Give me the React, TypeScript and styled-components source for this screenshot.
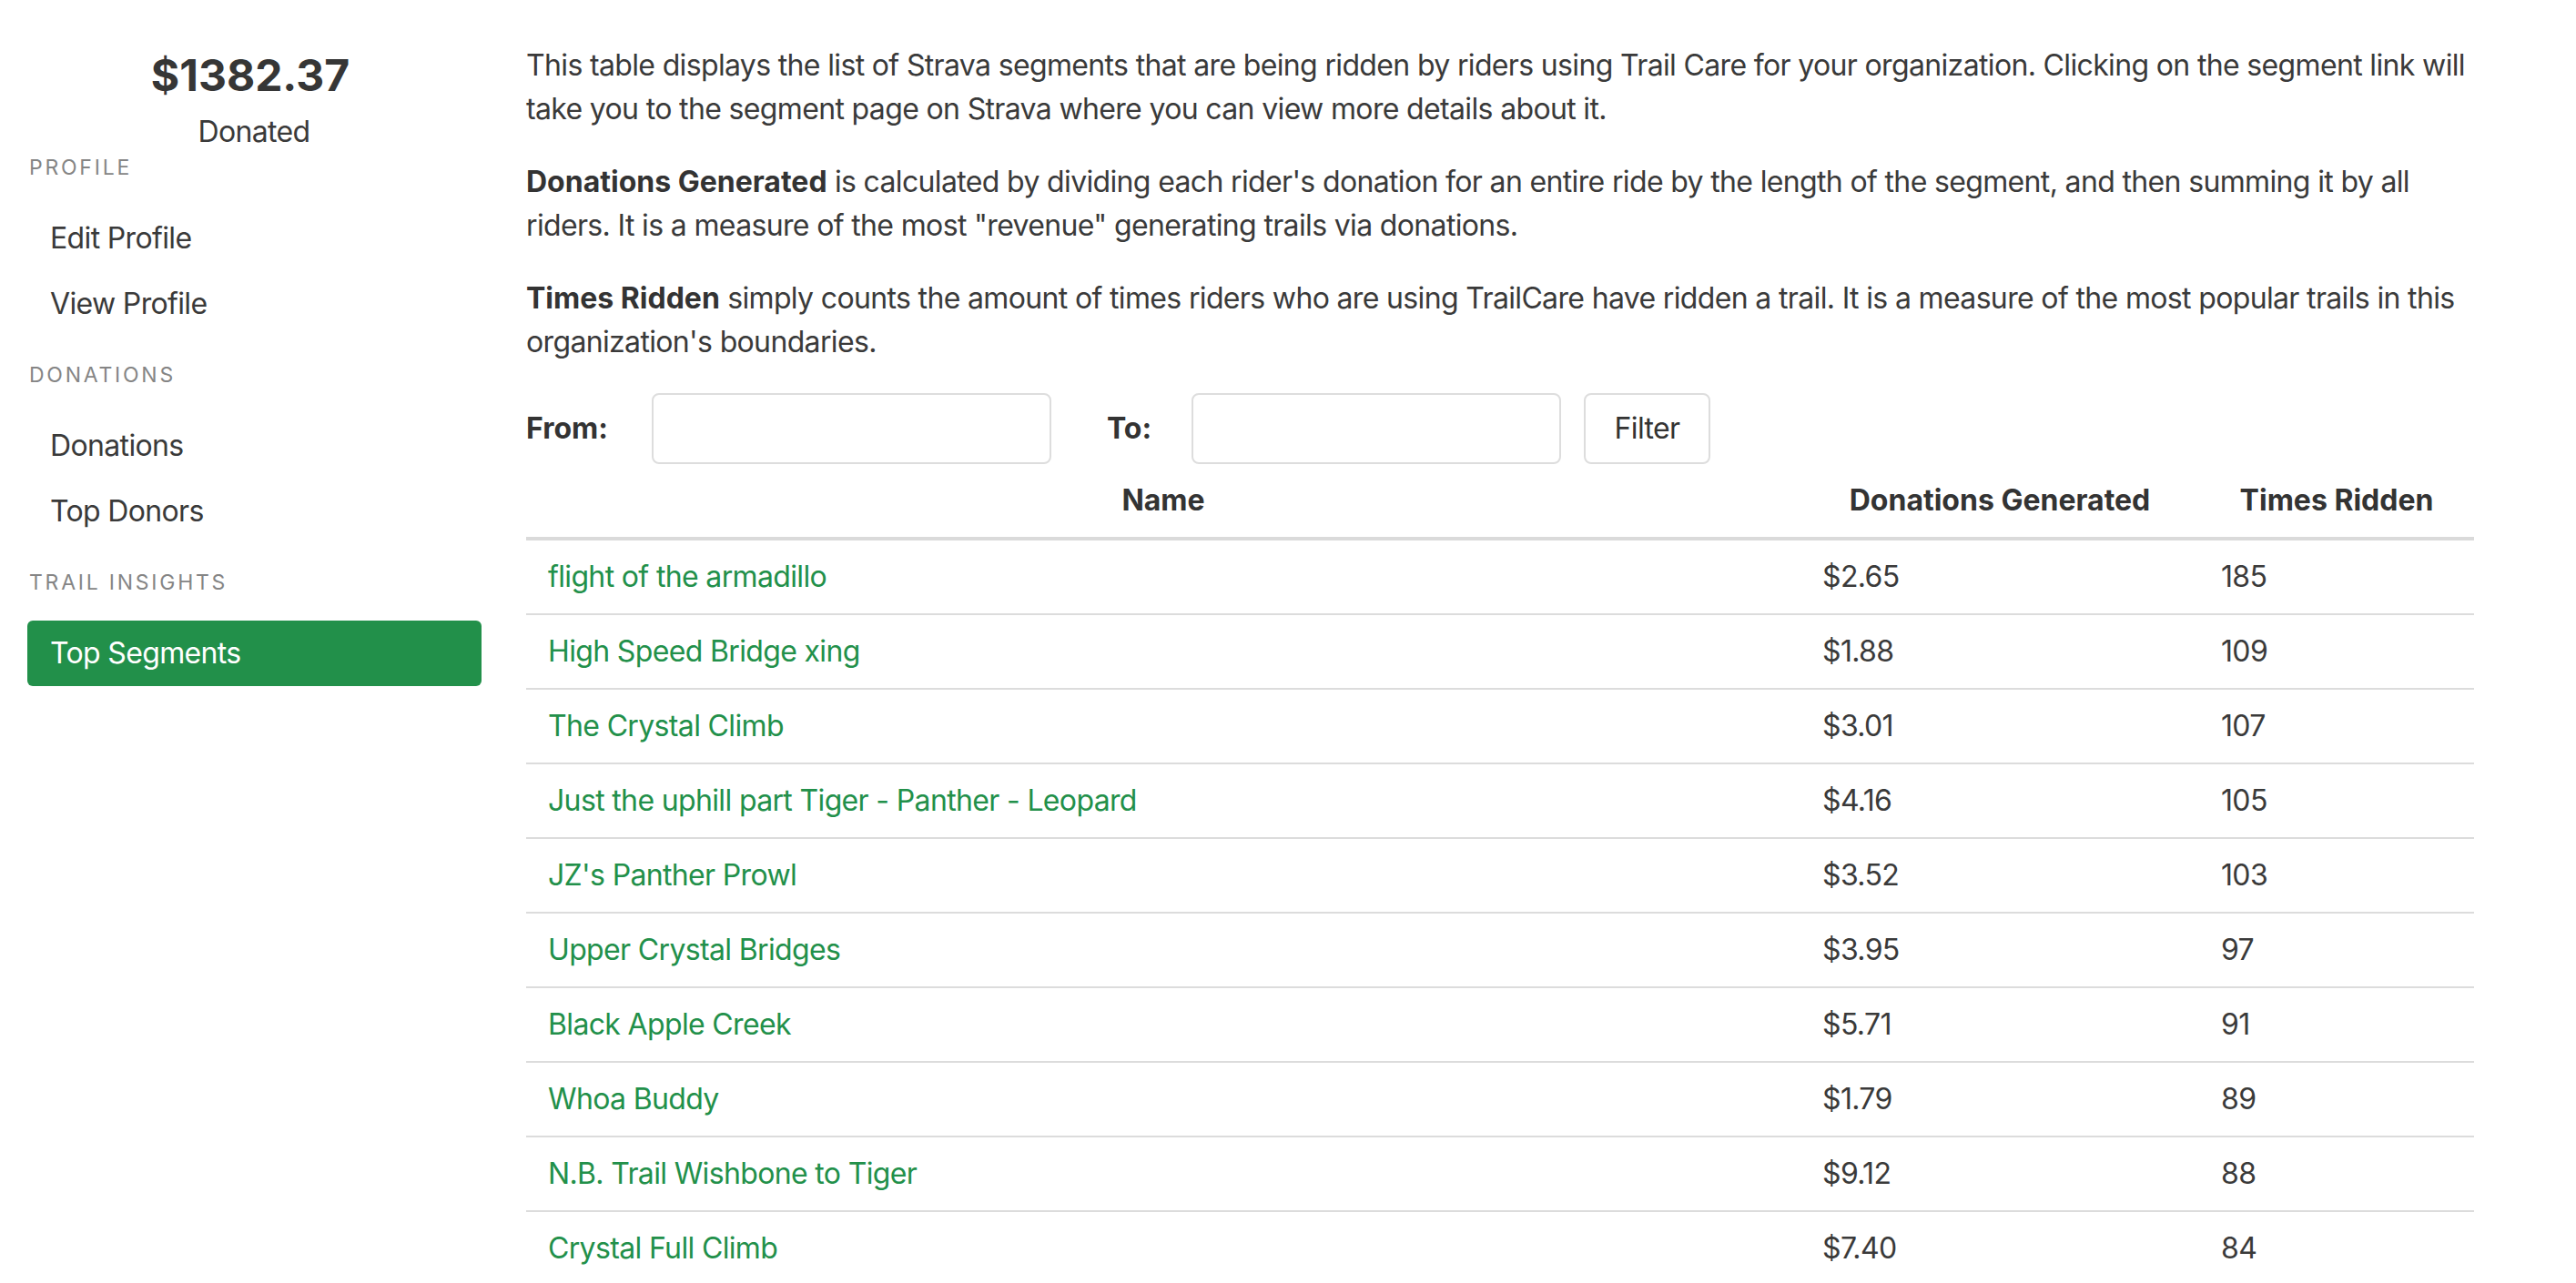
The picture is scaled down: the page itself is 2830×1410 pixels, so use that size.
import React from "react";
import styled, { createGlobalStyle } from "styled-components";

const GlobalStyle = createGlobalStyle`
  html, body { margin: 0; padding: 0; background: #ffffff; }
  body {
    font-family: Inter, "Noto Sans", "Liberation Sans", sans-serif;
    font-size: 32px;
    line-height: 48px;
    letter-spacing: -0.65px;
    color: #3a3a3a;
  }
  * { box-sizing: border-box; }
`;

const Page = styled.div`
  display: flex;
  align-items: flex-start;
  width: 2830px;
  height: 1410px;
  overflow: hidden;
`;

const Sidebar = styled.aside`
  width: 560px;
  flex: none;
  padding: 54px 31px 0 30px;
  display: flex;
  flex-direction: column;
`;

const Stats = styled.div`
  display: flex;
  flex-direction: column;
  align-items: center;
  padding-right: 9px;
`;

const Amount = styled.div`
  font-size: 48px;
  line-height: 58px;
  font-weight: 700;
  letter-spacing: 0;
  color: #363636;
`;

const AmountLabel = styled.div`
  font-size: 32px;
  line-height: 40px;
  margin-top: 13px;
  padding-left: 8px;
`;

const SectionHeading = styled.div<{ $first?: boolean }>`
  font-size: 23px;
  line-height: 36px;
  letter-spacing: 0.12em;
  text-transform: uppercase;
  color: #858585;
  margin: ${(p) => (p.$first ? "1px" : "24px")} 0 24px 2px;
`;

const NavItem = styled.a<{ $active?: boolean }>`
  display: block;
  padding: 12px 25px;
  line-height: 48px;
  font-size: 32px;
  border-radius: 6px;
  text-decoration: none;
  color: ${(p) => (p.$active ? "#ffffff" : "#3a3a3a")};
  background: ${(p) => (p.$active ? "#22904a" : "transparent")};
`;

const Main = styled.main`
  width: 2140px;
  flex: none;
  margin-left: 18px;
  padding-top: 48px;
`;

const Para = styled.p`
  margin: 0 0 32px 0;
  font-size: 32px;
  line-height: 48px;
`;

const Strong = styled.strong`
  font-weight: 700;
  letter-spacing: 0;
  color: #333333;
`;

const FilterForm = styled.form`
  display: flex;
  align-items: center;
  height: 78px;
`;

const FieldLabel = styled.label<{ $width: number; $gap?: number }>`
  width: ${(p) => p.$width}px;
  margin-left: ${(p) => p.$gap ?? 0}px;
  font-weight: 700;
  letter-spacing: 0;
  color: #333333;
  flex: none;
`;

const DateInput = styled.input<{ $width: number }>`
  width: ${(p) => p.$width}px;
  height: 78px;
  border: 2px solid #dddddd;
  border-radius: 8px;
  background: #ffffff;
  flex: none;
  font: inherit;
  padding: 0 20px;
`;

const FilterButton = styled.button`
  margin-left: 25px;
  width: 139px;
  height: 78px;
  border: 2px solid #dddddd;
  border-radius: 8px;
  background: #ffffff;
  font: inherit;
  letter-spacing: -0.65px;
  color: #333333;
  flex: none;
`;

const Table = styled.table`
  width: 2140px;
  border-collapse: collapse;
  table-layout: fixed;
`;

const HeadCell = styled.th<{ $width: number }>`
  width: ${(p) => p.$width}px;
  padding: 16px 24px;
  line-height: 48px;
  font-weight: 700;
  letter-spacing: 0;
  color: #333333;
  text-align: center;
  border-bottom: 4px solid #dadada;
`;

const Row = styled.tr`
  border-bottom: 2px solid #dcdcdc;
`;

const Cell = styled.td`
  padding: 16px 24px;
  line-height: 48px;
  white-space: nowrap;
`;

const SegmentLink = styled.a`
  color: #22904a;
  text-decoration: none;
`;

const segments = [
  { name: "flight of the armadillo", donations: "$2.65", times: 185 },
  { name: "High Speed Bridge xing", donations: "$1.88", times: 109 },
  { name: "The Crystal Climb", donations: "$3.01", times: 107 },
  { name: "Just the uphill part Tiger - Panther - Leopard", donations: "$4.16", times: 105 },
  { name: "JZ's Panther Prowl", donations: "$3.52", times: 103 },
  { name: "Upper Crystal Bridges", donations: "$3.95", times: 97 },
  { name: "Black Apple Creek", donations: "$5.71", times: 91 },
  { name: "Whoa Buddy", donations: "$1.79", times: 89 },
  { name: "N.B. Trail Wishbone to Tiger", donations: "$9.12", times: 88 },
  { name: "Crystal Full Climb", donations: "$7.40", times: 84 },
];

export default function App() {
  return (
    <>
      <GlobalStyle />
      <Page>
        <Sidebar>
          <Stats>
            <Amount>$1382.37</Amount>
            <AmountLabel>Donated</AmountLabel>
          </Stats>
          <SectionHeading $first>Profile</SectionHeading>
          <NavItem href="#">Edit Profile</NavItem>
          <NavItem href="#">View Profile</NavItem>
          <SectionHeading>Donations</SectionHeading>
          <NavItem href="#">Donations</NavItem>
          <NavItem href="#">Top Donors</NavItem>
          <SectionHeading>Trail Insights</SectionHeading>
          <NavItem href="#" $active>
            Top Segments
          </NavItem>
        </Sidebar>
        <Main>
          <Para>
            This table displays the list of Strava segments that are being ridden by riders using Trail Care for
            your organization. Clicking on the segment link will take you to the segment page on Strava where you
            can view more details about it.
          </Para>
          <Para>
            <Strong>Donations Generated</Strong> is calculated by dividing each rider's donation for an entire ride
            by the length of the segment, and then summing it by all riders. It is a measure of the most "revenue"
            generating trails via donations.
          </Para>
          <Para>
            <Strong>Times Ridden</Strong> simply counts the amount of times riders who are using TrailCare have
            ridden a trail. It is a measure of the most popular trails in this organization's boundaries.
          </Para>
          <FilterForm onSubmit={(e) => e.preventDefault()}>
            <FieldLabel $width={138}>From:</FieldLabel>
            <DateInput $width={439} />
            <FieldLabel $width={93} $gap={61}>
              To:
            </FieldLabel>
            <DateInput $width={406} />
            <FilterButton type="submit">Filter</FilterButton>
          </FilterForm>
          <Table>
            <thead>
              <tr>
                <HeadCell $width={1400}>Name</HeadCell>
                <HeadCell $width={438}>Donations Generated</HeadCell>
                <HeadCell $width={302}>Times Ridden</HeadCell>
              </tr>
            </thead>
            <tbody>
              {segments.map((s) => (
                <Row key={s.name}>
                  <Cell>
                    <SegmentLink href="#">{s.name}</SegmentLink>
                  </Cell>
                  <Cell>{s.donations}</Cell>
                  <Cell>{s.times}</Cell>
                </Row>
              ))}
            </tbody>
          </Table>
        </Main>
      </Page>
    </>
  );
}
